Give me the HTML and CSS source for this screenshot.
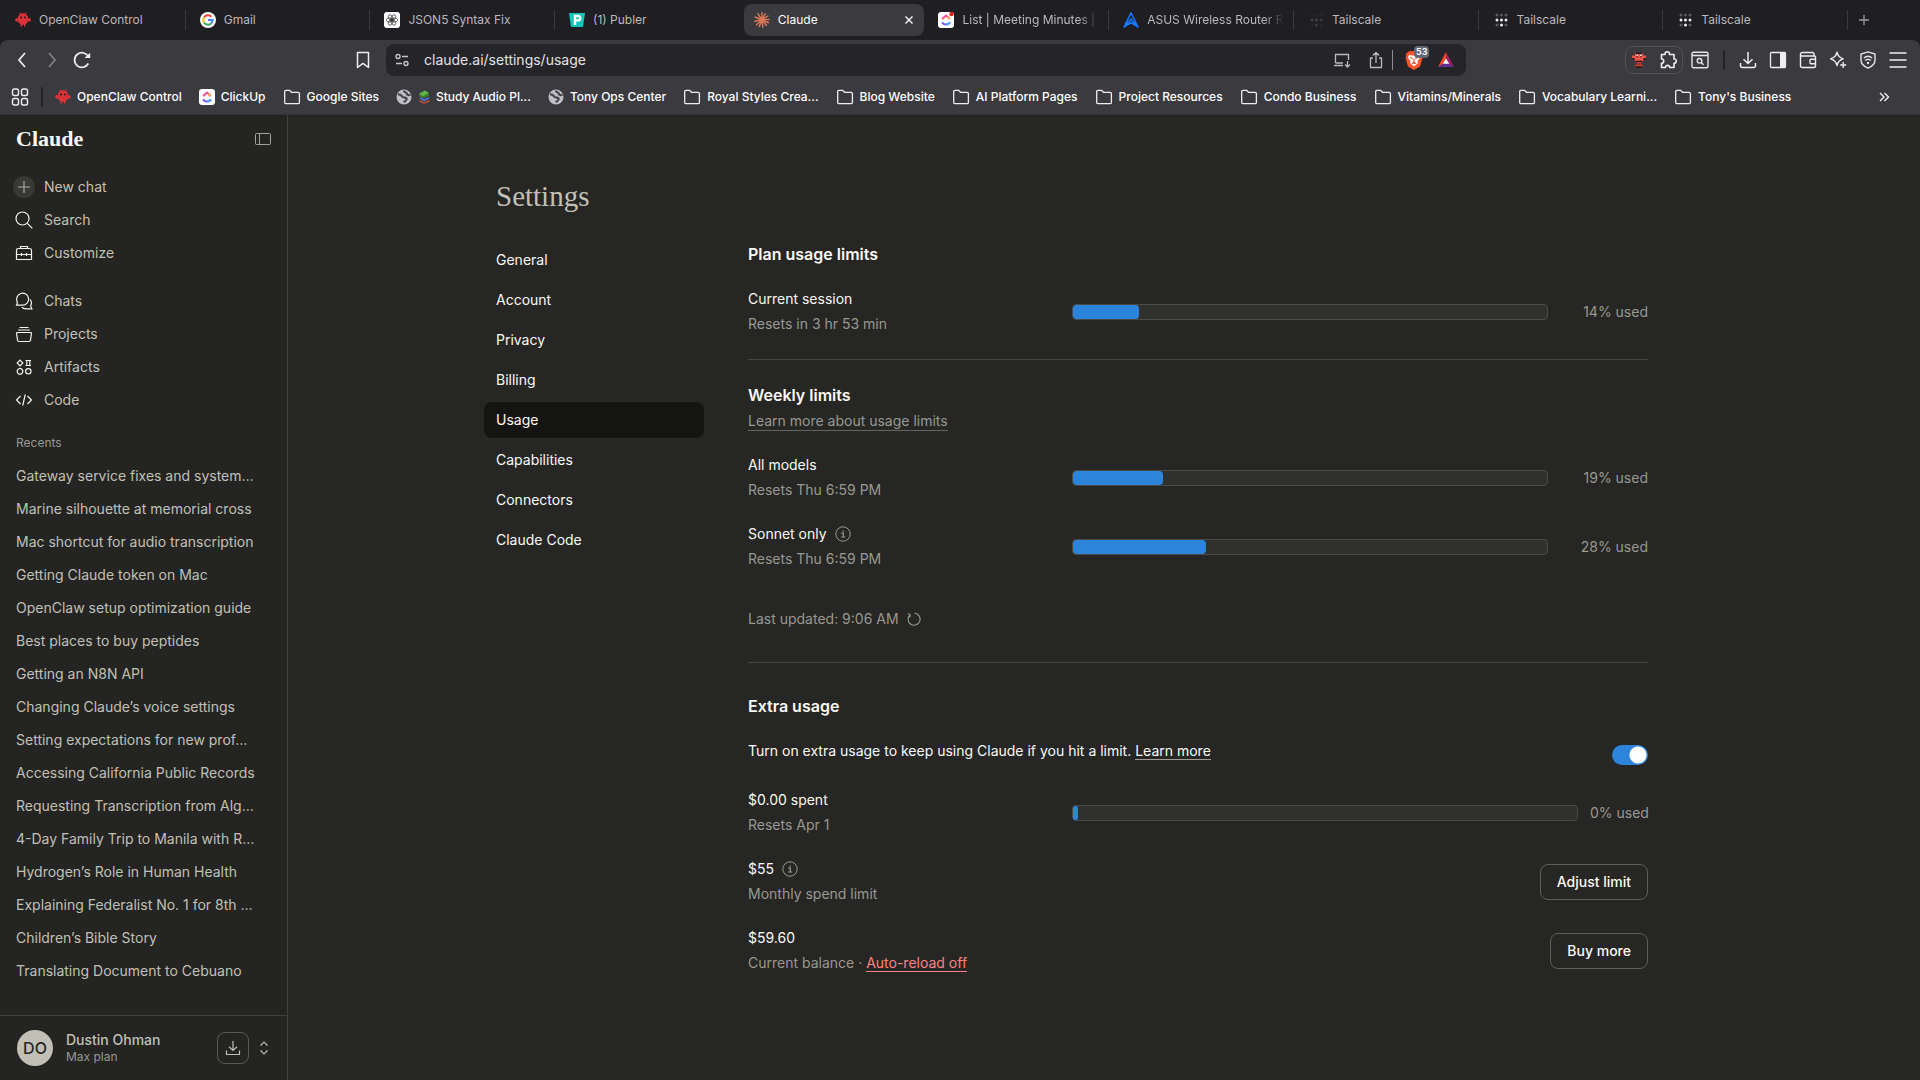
FILE: index.html
```html
<!DOCTYPE html>
<html lang="en">
<head>
<meta charset="utf-8">
<meta name="viewport" content="width=device-width, initial-scale=1">
<title>Claude</title>
<link rel="stylesheet" href="styles.css">
</head>
<body>
<svg class="sprite" aria-hidden="true">
  <symbol id="claw" viewBox="0 0 16 16"><path d="M5.500 14.600v-2.300C3 10.800 2.300 8.500 2.800 6 3.300 3 5.300 1.200 8 1.200S12.700 3 13.200 6c.5 2.500-.2 4.800-2.700 6.300v2.300H9v-1.800H7v1.800z" fill="#d93339"/><ellipse cx="1.700" cy="7.800" rx="1.500" ry="1.900" fill="#d93339"/><ellipse cx="14.300" cy="7.800" rx="1.500" ry="1.900" fill="#d93339"/><path d="M6 2 4.800.5M10 2 11.200.5" stroke="#d93339"/><circle cx="6" cy="5.500" r="1" fill="#2a1519"/><circle cx="10" cy="5.500" r="1" fill="#2a1519"/></symbol>
  <symbol id="folder" viewBox="0 0 18 18"><path d="M1.700 3.500c0-.7.400-1.200 1.200-1.200h3.800l1.800 2h6.600c.8 0 1.300.5 1.300 1.200v9c0 .8-.5 1.200-1.300 1.200H2.900c-.8 0-1.200-.4-1.200-1.200z" fill="none" stroke="#eeeef0" stroke-width="1.300"/></symbol>
  <symbol id="globe" viewBox="0 0 16 16"><circle cx="8" cy="8" r="7.500" fill="#bfc0c5"/><path d="M2 5.500c2-.3 3.300.7 4.500 2.200 1.300 1.500 3.500.4 4.200 2 .5 1.500-1.700 2-2.700 3.800M8 1.500c-.5 2 2.800 1.500 2.800 3.300 0 1.500 2 1.400 3.700.9" fill="none" stroke="#46464c" stroke-width="2.200"/></symbol>
  <symbol id="clickup" viewBox="0 0 16 16"><rect width="16" height="16" rx="3" fill="#fff"/><path d="M4.200 6.900 8 3.600l3.800 3.300" fill="none" stroke="#f0509a" stroke-width="2"/><path d="M4.200 6.900 6.500 4.900" stroke="#ff5f8a" stroke-width="2"/><path d="m9.500 4.900 2.300 2" stroke="#ffa33c" stroke-width="2"/><path d="M4 10.300c2.300 3 5.700 3 8 0" fill="none" stroke="#7755f5" stroke-width="2.100"/><path d="M8 12.500c1.600 0 2.900-.8 4-2.200" fill="none" stroke="#48a5ff" stroke-width="2.100"/></symbol>
  <symbol id="tailscale" viewBox="0 0 14 16"><g fill="#5a5a5e"><circle cx="3" cy="3" r="1.500"/><circle cx="7.500" cy="3" r="1.500"/><circle cx="12" cy="3" r="1.500"/><circle cx="3" cy="13" r="1.500"/><circle cx="12" cy="13" r="1.500"/></g><g fill="#ececee"><circle cx="3" cy="8" r="1.500"/><circle cx="7.500" cy="8" r="1.500"/><circle cx="12" cy="8" r="1.500"/><circle cx="7.500" cy="13" r="1.500"/></g></symbol>
  <symbol id="info" viewBox="0 0 16 16"><circle cx="8" cy="8" r="7.200" fill="none" stroke="#9a988f"/><path d="M6.300 7.200h2v3.600M6.200 11h4M8 4.400v1.400" fill="none" stroke="#9a988f" stroke-width="1.200"/></symbol>
</svg>

<header class="browser">
  <nav class="tabs" aria-label="Tabs">
    <a class="tab" href="#"><svg class="ic16"><use href="#claw"/></svg><span>OpenClaw Control</span></a>
    <a class="tab" href="#"><svg class="ic16" viewBox="0 0 16 16"><circle cx="8" cy="8" r="8" fill="#fff"/><g fill="none" stroke-width="2"><path d="M4 5.500A4.700 4.700 0 0 1 11.400 4.700" stroke="#ea4335"/><path d="M4 10.400a4.700 4.700 0 0 1 0-4.900" stroke="#fbbc05"/><path d="M11.100 11.500A4.700 4.700 0 0 1 4 10.400" stroke="#34a853"/><path d="M8 8h4.700c0 1.400-.6 2.600-1.600 3.500" stroke="#4285f4"/></g></svg><span>Gmail</span></a>
    <a class="tab" href="#"><svg class="ic16" viewBox="0 0 16 16"><rect width="16" height="16" rx="3" fill="#fff"/><g fill="none" stroke="#333" stroke-width=".7"><ellipse cx="8" cy="5.500" rx="2" ry="3.300" transform="rotate(30 8 8)"/><ellipse cx="8" cy="5.500" rx="2" ry="3.300" transform="rotate(90 8 8)"/><ellipse cx="8" cy="5.500" rx="2" ry="3.300" transform="rotate(150 8 8)"/><ellipse cx="8" cy="5.500" rx="2" ry="3.300" transform="rotate(210 8 8)"/><ellipse cx="8" cy="5.500" rx="2" ry="3.300" transform="rotate(270 8 8)"/><ellipse cx="8" cy="5.500" rx="2" ry="3.300" transform="rotate(330 8 8)"/></g></svg><span>JSON5 Syntax Fix</span></a>
    <a class="tab tab-open" href="#"><svg class="ic16" viewBox="0 0 16 16"><path d="M0 1h16l-2 14H2z" fill="#12c4bb"/><path d="M6 13V4h3a2.200 2.200 0 0 1 0 4.400H6" fill="none" stroke="#fff" stroke-width="2.400"/></svg><span>(1) Publer</span></a>
    <a class="tab tab-active" href="#" aria-current="page"><svg class="ic16" viewBox="0 0 16 16"><path d="M8 8V.8M8 8l3.200-6.200M8 8l5.800-4M8 8l7-.5M8 8l6.500 2.800M8 8l4.500 5.500M8 8l.8 7.200M8 8l-2.800 6.500M8 8l-5.500 4.700M8 8 .8 9.200M8 8 1.200 5M8 8 4 1.800" stroke="#d97757" stroke-width="1.500" stroke-linecap="round"/></svg><span>Claude</span><svg class="close" viewBox="0 0 10 10"><path d="m1.500 1.500 7 7m0-7-7 7" stroke="#fff" stroke-width="1.400"/></svg></a>
    <a class="tab" href="#"><svg class="ic16" viewBox="0 0 16 16"><use href="#clickup"/><circle cx="13.500" cy="2" r="2.200" fill="#f01c1c"/></svg><span class="fade">List | Meeting Minutes |</span></a>
    <a class="tab" href="#"><svg class="ic16" viewBox="0 0 16 16"><path d="M8 .8 15 15 8 10.500 1 15zM1.500 14.500 8 7l6.500 7.500" fill="none" stroke="#1677ff" stroke-width="1.500" stroke-linejoin="round"/></svg><span class="fade">ASUS Wireless Router R</span></a>
    <a class="tab" href="#"><svg class="ic16 ghost"><use href="#tailscale"/></svg><span>Tailscale</span></a>
    <a class="tab" href="#"><svg class="ic16"><use href="#tailscale"/></svg><span>Tailscale</span></a>
    <a class="tab" href="#"><svg class="ic16"><use href="#tailscale"/></svg><span>Tailscale</span></a>
    <button class="new-tab" aria-label="New tab"><svg viewBox="0 0 12 12"><path d="M6 1v10M1 6h10" stroke="#9b9ba0" stroke-width="1.300"/></svg></button>
  </nav>

  <div class="chrome">
    <div class="toolbar">
      <div class="history">
        <button aria-label="Back"><svg class="ic18" viewBox="0 0 18 18"><path d="M12 2 6 9l6 7" fill="none" stroke="#f0f0f2" stroke-width="1.700"/></svg></button>
        <button aria-label="Forward"><svg class="ic18" viewBox="0 0 18 18"><path d="m6 2 6 7-6 7" fill="none" stroke="#828287" stroke-width="1.700"/></svg></button>
        <button aria-label="Reload"><svg class="ic18" viewBox="0 0 18 18"><path d="M15.300 12.500A7.300 7.300 0 1 1 15.500 6" fill="none" stroke="#f0f0f2" stroke-width="1.700"/><path d="M11.500 7h5.700V1.800z" fill="#f0f0f2"/></svg></button>
        <button class="bookmark" aria-label="Bookmark this page"><svg class="ic18" viewBox="0 0 18 18"><path d="M3.500 1.500h11v15L9 12.300l-5.500 4.200z" fill="none" stroke="#eeeef0" stroke-width="1.500" stroke-linejoin="round"/></svg></button>
      </div>
      <div class="omnibox">
        <svg class="ic16" viewBox="0 0 16 16"><g fill="none" stroke="#c5c5ca" stroke-width="1.400"><circle cx="4" cy="4.500" r="2"/><path d="M8 4.500h6M2 11.500h6"/><circle cx="12" cy="11.500" r="2"/></g></svg>
        <input type="text" aria-label="Address" value="claude.ai/settings/usage">
        <svg class="ic18" viewBox="0 0 18 18"><path d="M10 14.500H1M2.500 12V3.500h13V9M2.500 12H10M14.500 10v6m-2.500-2.500 2.500 2.500 2.500-2.500" fill="none" stroke="#b9b9be" stroke-width="1.300"/></svg>
        <svg class="ic18 share" viewBox="0 0 18 18"><path d="M6 7H3.500v9.500h11V7H12M9 12V1.500M5.800 4.500 9 1.500l3.200 3" fill="none" stroke="#b9b9be" stroke-width="1.300" stroke-linejoin="round"/></svg>
        <i class="pipe"></i>
        <span class="shield"><svg class="ic20" viewBox="0 0 20 20"><path d="m6 1-2 1-2.500 2.500.8 1.500-.8 2 2.500 8.500L10 20l6-3.500L18.500 8l-.8-2 .8-1.500L16 2l-2-1z" fill="#fb542b"/><path d="m5 5 3 .6h4L15 5l1 3-2.500 3 .5 2-4 3.500L6 13l.5-2L4 8z" fill="#fff"/><path d="m6 7.500 3 1M14 7.500l-3 1M10 9v3m-2 1.500 2-1 2 1" stroke="#fb542b" stroke-width="1.300"/></svg><b class="badge">53</b></span>
        <svg class="ic18 bat" viewBox="0 0 18 18"><path d="M9 1 1 16l5-3 3-5z" fill="#ff4724"/><path d="m9 1 8 15-5-3-3-5z" fill="#9e1f63"/><path d="M1 16h16l-5-3.500H6z" fill="#662d91"/><path d="m9 7.500 3.200 5.200H5.800z" fill="#fff"/></svg>
      </div>
      <div class="tools">
        <div class="ext">
          <svg class="ic18" viewBox="0 0 18 18"><path d="M5 2.500h8v2h3v2.800h-2.500V10h-9V7.300H2V4.500h3z" fill="#f4554a"/><path d="M6.500 11.500h5M5.500 14.500h7" stroke="#e0382f" stroke-width="2"/><path d="M6 2.300h6M2 8h3M13 8h3M6 10.300h6M6 16.200h6" stroke="#1e1214" stroke-width="1.200"/><path d="M6.500 4.500h1.500m2 0h1.500" stroke="#fff" stroke-width="1.500"/><path d="M6.500 5.800h1.500m2 0h1.500" stroke="#1e1214"/></svg>
          <svg class="ic20" viewBox="0 0 20 20"><path d="M3.500 4.500H7c-.5-3.700 5-3.700 4.500 0H16V9c3-.4 3 4.500 0 4.200v4.300h-4.300c.3-2.800-4.400-2.800-4.200 0h-4v-4.300c3 .3 3-4.600 0-4.200z" fill="none" stroke="#eeeef0" stroke-width="1.600" stroke-linejoin="round"/></svg>
        </div>
        <svg class="ic18 look" viewBox="0 0 18 18"><rect x="1" y="1.200" width="16" height="15.600" rx="1.500" fill="none" stroke="#e5e5e8" stroke-width="1.400"/><path d="M1 4.500h16" stroke="#e5e5e8" stroke-width="1.600"/><circle cx="8.500" cy="9.800" r="2.300" fill="none" stroke="#e5e5e8" stroke-width="1.400"/><path d="m10.200 11.500 2.300 2.300" stroke="#e5e5e8" stroke-width="1.500"/></svg>
        <i class="bar-sep"></i>
        <svg class="ic18" viewBox="0 0 18 18"><path d="M9 1v11.500M4.500 8.200 9 12.500l4.500-4.300M1.500 12v2.500q0 2 2 2h11q2 0 2-2V12" fill="none" stroke="#eeeef0" stroke-width="1.500"/></svg>
        <svg class="ic18" viewBox="0 0 18 18"><rect x="1.500" y="1.500" width="15" height="15" rx="1" fill="none" stroke="#eeeef0" stroke-width="1.300"/><path d="M11 1.500h5.500v15H11z" fill="#eeeef0"/></svg>
        <svg class="ic18" viewBox="0 0 18 18"><path d="M15 5V3q0-1.500-1.500-1.500h-10Q1.500 1.500 1.500 3.300T3.500 5h12q1 0 1 1v9q0 1.500-1.500 1.500H3.500q-2 0-2-2V3.300M16.500 8.300H12q-1 0-1 1v2.500q0 1 1 1h4.500" fill="none" stroke="#eeeef0" stroke-width="1.400"/></svg>
        <svg class="ic18" viewBox="0 0 18 18"><path d="M8 1.200c.8 4 2.200 5.500 6.200 6.600-4 1.200-5.400 2.700-6.200 6.700-.8-4-2.200-5.500-6.300-6.700C5.800 6.700 7.200 5.200 8 1.200zM14.200 11v6M11.200 14h6" fill="none" stroke="#eeeef0" stroke-width="1.400" stroke-linejoin="round"/></svg>
        <svg class="ic18" viewBox="0 0 18 18"><path d="M9 .9 16 3v6c0 4-2.800 6.500-7 8.200C4.800 15.500 2 13 2 9V3z" fill="none" stroke="#e5e5e8" stroke-width="1.400"/><path d="M4.800 7c2.700-2.200 5.700-2.200 8.400 0M6.200 9.500c1.900-1.500 3.700-1.500 5.600 0" fill="none" stroke="#e5e5e8" stroke-width="1.400"/><circle cx="9" cy="12" r="1.200" fill="#e5e5e8"/></svg>
        <svg class="ic18" viewBox="0 0 18 18"><path d="M.5 2h17M.5 9h17M.5 16h17" stroke="#eeeef0" stroke-width="1.600"/></svg>
      </div>
    </div>

    <nav class="bookmarks" aria-label="Bookmarks">
      <svg class="ic18" viewBox="0 0 18 18"><g fill="none" stroke="#eeeef0" stroke-width="1.400"><rect x="1.500" y="1" width="6" height="6.500" rx="1.800"/><rect x="10.500" y="1" width="6" height="6.500" rx="1.800"/><rect x="1.500" y="10.500" width="6" height="6.500" rx="1.800"/><rect x="10.500" y="10.500" width="6" height="6.500" rx="1.800"/></g></svg>
      <i class="bar-sep"></i>
      <div class="marks">
        <a href="#"><svg class="ic16"><use href="#claw"/></svg>OpenClaw Control</a>
        <a href="#"><svg class="ic16"><use href="#clickup"/></svg>ClickUp</a>
        <a href="#"><svg class="ic18"><use href="#folder"/></svg>Google Sites</a>
        <a href="#"><svg class="ic16"><use href="#globe"/></svg><svg class="books" viewBox="0 0 12 14"><path d="M1 3.500 7 .5l4 2.500-6 3.500z" fill="#5fb548"/><path d="M1 3.500v2.300l4 2.400L11 5.500V3L5 6.500z" fill="#3d8532"/><path d="m2 7 4 2.200 5-2.400v2L6 11.500 2 9z" fill="#4774c9"/><path d="m1 9.800 5 2.400 5.500-2.400v1.700L6 14l-5-2.500z" fill="#bd4a3b"/></svg>Study Audio Pl...</a>
        <a href="#"><svg class="ic16"><use href="#globe"/></svg>Tony Ops Center</a>
        <a href="#"><svg class="ic18"><use href="#folder"/></svg>Royal Styles Crea...</a>
        <a href="#"><svg class="ic18"><use href="#folder"/></svg>Blog Website</a>
        <a href="#"><svg class="ic18"><use href="#folder"/></svg>AI Platform Pages</a>
        <a href="#"><svg class="ic18"><use href="#folder"/></svg>Project Resources</a>
        <a href="#"><svg class="ic18"><use href="#folder"/></svg>Condo Business</a>
        <a href="#"><svg class="ic18"><use href="#folder"/></svg>Vitamins/Minerals</a>
        <a href="#"><svg class="ic18"><use href="#folder"/></svg>Vocabulary Learni...</a>
        <a href="#"><svg class="ic18"><use href="#folder"/></svg>Tony's Business</a>
      </div>
      <button class="more" aria-label="More bookmarks"><svg viewBox="0 0 12 10"><path d="m2 1 4 4-4 4M6.500 1l4 4-4 4" fill="none" stroke="#eeeef0" stroke-width="1.400"/></svg></button>
    </nav>
  </div>
</header>

<div class="app">
  <aside class="sidebar">
    <div class="brand">
      <a href="#">Claude</a>
      <button aria-label="Close sidebar"><svg class="ic18" viewBox="0 0 18 18"><rect x="1.500" y="3.500" width="15" height="11" rx="1" fill="none" stroke="#a3a197"/><path d="M5.500 3.500v11" stroke="#a3a197"/></svg></button>
    </div>
    <nav class="menu">
      <a href="#"><svg class="ic22" viewBox="0 0 22 22"><circle cx="11" cy="11" r="11" fill="#383835"/><path d="M11 5v12M5 11h12" stroke="#a9a79e" stroke-width="1.200"/></svg>New chat</a>
      <a href="#"><svg class="ic22" viewBox="0 0 22 22"><circle cx="9.500" cy="9.500" r="6.500" fill="none" stroke="#f5f4ef" stroke-width="1.200"/><path d="m14.300 14.300 5 5" stroke="#f5f4ef" stroke-width="1.200"/></svg>Search</a>
      <a href="#"><svg class="ic22" viewBox="0 0 22 22"><path d="M7.500 6.500v-2h7v2M3.500 8.500q0-2 2-2h11q2 0 2 2v9h-15zM3.500 12.500h15M8.500 11v3m5-3v3" fill="none" stroke="#f5f4ef" stroke-width="1.200"/></svg>Customize</a>
    </nav>
    <nav class="menu">
      <a href="#"><svg class="ic22" viewBox="0 0 22 22"><path d="M3.500 15.200h6a6 6 0 1 0-5.200-3.200c.2 1.300-.8 3.200-.8 3.200zM17 9.300c1.700 2 1.800 4.300.7 6.200.1 1.300 1.100 3.300 1.100 3.300h-5.500c-2 0-3.500-.5-4.500-1.700" fill="none" stroke="#f5f4ef" stroke-width="1.200"/></svg>Chats</a>
      <a href="#"><svg class="ic22" viewBox="0 0 22 22"><path d="M6.500 4.500h9M5 7h12M4.500 9.500h13q1 0 .9 1l-.9 6.500q-.2 1.500-1.500 1.500H6q-1.300 0-1.500-1.500l-.9-6.500q-.1-1 .9-1z" fill="none" stroke="#f5f4ef" stroke-width="1.200"/></svg>Projects</a>
      <a href="#"><svg class="ic22" viewBox="0 0 22 22"><g fill="none" stroke="#f5f4ef" stroke-width="1.200"><path d="m7 4.200 2.800 2.800L7 9.800 4.200 7zM12.500 4.500h5.500M12.500 9.500h5.500M13.800 4.500v5m3-5v5M7 12.300l1.700.8 1.200 1.600-.4 2-1.500 1.500-2.100-.1-1.500-1.500-.2-1.900 1-1.600z"/><circle cx="15.300" cy="15.300" r="2.700"/></g></svg>Artifacts</a>
      <a href="#"><svg class="ic22" viewBox="0 0 22 22"><path d="m7.500 7-4 4 4 4m7-8 4 4-4 4M12.300 5.500l-2.600 11" fill="none" stroke="#f5f4ef" stroke-width="1.200"/></svg>Code</a>
    </nav>
    <h2 class="recents-title">Recents</h2>
    <nav class="recents">
      <a href="#">Gateway service fixes and system…</a>
      <a href="#">Marine silhouette at memorial cross</a>
      <a href="#">Mac shortcut for audio transcription</a>
      <a href="#">Getting Claude token on Mac</a>
      <a href="#">OpenClaw setup optimization guide</a>
      <a href="#">Best places to buy peptides</a>
      <a href="#">Getting an N8N API</a>
      <a href="#">Changing Claude’s voice settings</a>
      <a href="#">Setting expectations for new prof…</a>
      <a href="#">Accessing California Public Records</a>
      <a href="#">Requesting Transcription from Alg…</a>
      <a href="#">4-Day Family Trip to Manila with R…</a>
      <a href="#">Hydrogen’s Role in Human Health</a>
      <a href="#">Explaining Federalist No. 1 for 8th …</a>
      <a href="#">Children’s Bible Story</a>
      <a href="#">Translating Document to Cebuano</a>
    </nav>
    <div class="account">
      <span class="avatar">DO</span>
      <div class="who"><strong>Dustin Ohman</strong><span>Max plan</span></div>
      <button class="get" aria-label="Download apps"><svg class="ic18" viewBox="0 0 18 18"><path d="M9 2v9.500M5 7.700l4 3.800 4-3.800M2.500 11.500v4h13v-4" fill="none" stroke="#c2c0b6" stroke-width="1.200"/></svg></button>
      <svg class="updown" viewBox="0 0 8 14"><path d="M1 5V4l3-3 3 3v1M1 9v1l3 3 3-3V9" fill="none" stroke="#b5b3aa" stroke-width="1.200"/></svg>
    </div>
  </aside>

  <main class="main">
    <div class="content">
      <h1>Settings</h1>
      <div class="columns">
        <nav class="pages" aria-label="Settings">
          <a href="#">General</a>
          <a href="#">Account</a>
          <a href="#">Privacy</a>
          <a href="#">Billing</a>
          <a class="current" href="#" aria-current="page">Usage</a>
          <a href="#">Capabilities</a>
          <a href="#">Connectors</a>
          <a href="#">Claude Code</a>
        </nav>
        <div class="panels">
          <section class="panel">
            <h2>Plan usage limits</h2>
            <div class="row first">
              <div class="label"><p>Current session</p><small>Resets in 3 hr 53 min</small></div>
              <div class="meter" role="progressbar" aria-label="Current session" aria-valuenow="14"><span style="width:14%"></span></div>
              <span class="used">14% used</span>
            </div>
          </section>
          <section class="panel">
            <h2>Weekly limits</h2>
            <a class="learn" href="#">Learn more about usage limits</a>
            <div class="row">
              <div class="label"><p>All models</p><small>Resets Thu 6:59 PM</small></div>
              <div class="meter" role="progressbar" aria-label="All models" aria-valuenow="19"><span style="width:19%"></span></div>
              <span class="used">19% used</span>
            </div>
            <div class="row">
              <div class="label"><p>Sonnet only <svg class="ic16"><use href="#info"/></svg></p><small>Resets Thu 6:59 PM</small></div>
              <div class="meter" role="progressbar" aria-label="Sonnet only" aria-valuenow="28"><span style="width:28%"></span></div>
              <span class="used">28% used</span>
            </div>
            <div class="updated">Last updated: 9:06 AM <button aria-label="Refresh"><svg class="ic14" viewBox="0 0 14 14"><path d="M3 2.800A6 6 0 1 0 7.500 1.200M1 1.500l2.200 1.400L2.800 5.500" fill="none" stroke="#9a988f" stroke-width="1.100"/></svg></button></div>
          </section>
          <section class="panel">
            <h2>Extra usage</h2>
            <div class="row first switch">
              <label for="extra">Turn on extra usage to keep using Claude if you hit a limit. <a href="#">Learn more</a></label>
              <input id="extra" type="checkbox" role="switch" checked>
            </div>
            <div class="row">
              <div class="label"><p>$0.00 spent</p><small>Resets Apr 1</small></div>
              <div class="meter" role="progressbar" aria-label="Extra usage spent" aria-valuenow="0"><span style="width:1%"></span></div>
              <span class="used tight">0% used</span>
            </div>
            <div class="row">
              <div class="label"><p>$55 <svg class="ic16"><use href="#info"/></svg></p><small>Monthly spend limit</small></div>
              <button class="btn">Adjust limit</button>
            </div>
            <div class="row">
              <div class="label"><p>$59.60</p><small>Current balance · <a class="reload" href="#">Auto-reload off</a></small></div>
              <button class="btn">Buy more</button>
            </div>
          </section>
        </div>
      </div>
    </div>
  </main>
</div>
</body>
</html>
```

FILE: styles.css
```css
* { box-sizing: border-box; }
body {
  margin: 0;
  min-height: 100vh;
  display: flex;
  flex-direction: column;
  background: #262624;
  color: #faf9f5;
  font: 14px/20px Inter, "Liberation Sans", sans-serif;
}
a { color: inherit; text-decoration: none; }
button { padding: 0; border: 0; background: none; color: inherit; font: inherit; display: flex; align-items: center; justify-content: center; }
h1, h2, p { margin: 0; font-weight: 400; }
svg { flex: none; display: block; }
.sprite { display: none; }
.ic14 { width: 14px; height: 14px; }
.ic16 { width: 16px; height: 16px; }
.ic18 { width: 18px; height: 18px; }
.ic20 { width: 20px; height: 20px; }
.ic22 { width: 22px; height: 22px; }

/* Browser frame */
.browser { background: #1f1e23; color: #fff; font-size: 12px; line-height: 16px; }
.tabs { display: grid; grid-template-columns: repeat(10, minmax(0, 1fr)) 28px; height: 40px; padding: 4px 42px 4px 3px; }
.tab {
  height: 32px;
  padding: 0 12px;
  display: flex;
  align-items: center;
  gap: 8px;
  color: #b9b9bd;
  white-space: nowrap;
  background: linear-gradient(#3b3a3f, #3b3a3f) right 2px center / 1px 20px no-repeat;
}
.tab span { flex: 1; min-width: 0; }
.tab .fade { -webkit-mask-image: linear-gradient(90deg, #000 85%, transparent); mask-image: linear-gradient(90deg, #000 85%, transparent); }
.tab-open { background: none; }
.tab-active { background: #3b3a3f; color: #fff; border-radius: 8px; margin: 0 2px; padding: 0 10px; }
.close { width: 10px; height: 10px; }
.ghost { opacity: .15; }
.new-tab { height: 32px; }
.new-tab svg { width: 12px; height: 12px; }

.chrome { background: #3b3a3f; border-radius: 8px 8px 0 0; border-bottom: 1px solid #302f33; }
.toolbar { display: flex; align-items: center; height: 40px; padding: 0 13px; }
.history { display: flex; gap: 12px; width: 373px; padding-right: 14px; }
.bookmark { margin-left: auto; }
.omnibox {
  display: flex;
  flex: 1;
  align-items: center;
  height: 32px;
  padding: 0 11px 0 8px;
  background: #252429;
  border-radius: 8px;
}
.omnibox input { flex: 1; min-width: 0; padding: 0; margin: 0 14px; border: 0; background: none; color: #e2e2e6; font: 14px/20px Inter, "Liberation Sans", sans-serif; }
.share { margin-left: 16px; }
.pipe { width: 1px; height: 20px; margin: 0 11px 0 7px; background: #8b8b90; }
.shield { position: relative; width: 20px; }
.badge { position: absolute; left: 10px; top: -4px; padding: 0 2px; border-radius: 4px; background: #636775; color: #fff; font-size: 9px; line-height: 12px; font-weight: 600; }
.bat { margin-left: 13px; }
.tools { display: flex; align-items: center; justify-content: flex-end; gap: 12px; width: 441px; }
.ext { display: flex; align-items: center; gap: 10px; padding: 3px 4px; border: 1px solid #525157; border-radius: 8px; }
.look { margin-left: -4px; }
.bar-sep { width: 2px; height: 20px; flex: none; background: #242328; border-radius: 1px; }
.tools .bar-sep { margin: 0 2px; }
.bookmarks { display: flex; align-items: center; height: 34px; padding: 0 30px 0 11px; gap: 12px; font-weight: 500; }
.marks { display: flex; flex: 1; gap: 17px; white-space: nowrap; overflow: hidden; }
.marks a { display: flex; align-items: center; gap: 6px; }
.books { width: 12px; height: 14px; }
.more svg { width: 12px; height: 10px; }

/* App */
.app { flex: 1; display: flex; }
.sidebar { width: 288px; flex: none; display: flex; flex-direction: column; background: #242422; border-right: 1px solid #40403d; color: #c2c0b6; }
.brand { display: flex; justify-content: space-between; align-items: center; height: 47px; padding: 0 15px 0 16px; color: #faf9f5; font: 700 22px/28px "Liberation Serif", serif; }
.menu { display: flex; flex-direction: column; padding: 8px 13px 7px; }
.menu a { display: flex; align-items: center; gap: 9px; height: 33px; }
.recents-title { padding: 10px 16px 6px; font-size: 12px; line-height: 20px; color: #9a988f; }
.recents { display: flex; flex-direction: column; padding: 0 16px 24px; }
.recents a { height: 33px; line-height: 33px; white-space: nowrap; }
.account { margin-top: auto; display: flex; align-items: center; height: 65px; padding: 0 19px 0 17px; border-top: 1px solid #40403d; }
.avatar { width: 36px; height: 36px; border-radius: 50%; background: #c2c0b6; color: #262624; font-size: 16px; line-height: 36px; font-weight: 500; text-align: center; }
.who { flex: 1; margin-left: 13px; }
.who strong, .who span { display: block; font-weight: 500; line-height: 18px; }
.who span { font-size: 12px; font-weight: 400; color: #9a988f; line-height: 16px; }
.get { width: 32px; height: 32px; border: 1px solid #5a5955; border-radius: 8px; margin-right: 11px; }
.updown { width: 8px; height: 14px; }

.main { flex: 1; min-width: 0; padding: 63px 64px 64px 0; }
.content { max-width: 1152px; margin: 0 auto; }
h1 { font: 29px/36px "Liberation Serif", serif; color: #c2c0b6; }
.columns { display: flex; gap: 44px; margin-top: 28px; }
.pages { width: 220px; flex: none; margin-left: -12px; display: flex; flex-direction: column; gap: 4px; }
.pages a { padding: 8px 12px; border-radius: 8px; }
.pages .current { background: #141413; }
.panels { flex: 1; min-width: 0; }
.panel { padding-bottom: 33px; }
.panel + .panel { border-top: 1px solid #444441; padding-top: 31px; }
.panel:first-child { padding-bottom: 25px; }
.panel:nth-child(2) { padding-top: 23px; }
.panel h2 { font-size: 16px; line-height: 24px; font-weight: 600; }
.row { display: flex; align-items: center; gap: 12px; margin-top: 24px; }
.row.first { margin-top: 23px; }
.label { flex: 1; min-width: 0; }
.label p { display: flex; align-items: center; gap: 8px; }
small { display: block; margin-top: 5px; font-size: 14px; color: #9a988f; }
.meter { flex: 0 1 476px; height: 16px; background: #30302e; border: 1px solid #4a4a46; border-radius: 4px; }
.meter span { display: block; height: 100%; min-width: 5px; border-radius: 4px; background: #2c84db; }
.meter:has(+ .tight) { flex-basis: 506px; }
.used { width: 88px; text-align: right; color: #9a988f; }
.used.tight { width: 58px; white-space: nowrap; }
.learn { display: inline-block; margin-top: 5px; color: #9a988f; border-bottom: 1px solid #66655f; line-height: 18px; }
.updated { display: flex; align-items: center; gap: 8px; margin-top: 40px; color: #9a988f; }
.switch { justify-content: space-between; align-items: flex-start; }
.switch a { border-bottom: 1px solid #a09f9a; }
.switch input { appearance: none; width: 36px; height: 20px; margin: 4px 0 1px; border-radius: 10px; background: radial-gradient(circle at 26px 10px, #fff 8px, #2c84db 9px); }
.reload { color: #fe8181; border-bottom: 1px solid #fe8181; }
.btn { height: 36px; padding: 0 16px; border: 1px solid #5e5d59; border-radius: 8px; font-weight: 500; }
```
